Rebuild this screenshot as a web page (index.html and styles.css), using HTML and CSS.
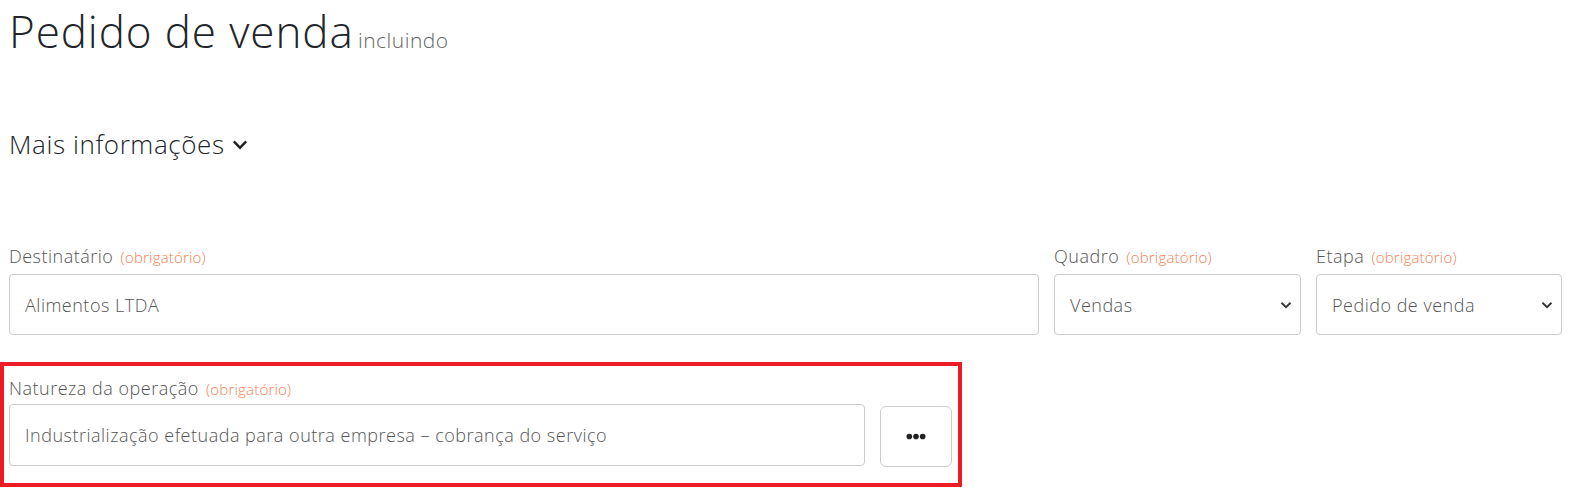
FILE: index.html
```html
<!DOCTYPE html>
<html lang="pt-BR">

<head>
    <meta charset="UTF-8">
    <meta name="viewport" content="width=device-width, initial-scale=1.0">
    <title>Pedido de venda</title>
    <link rel="stylesheet" href="styles.css">
</head>

<body>
    <div class="page">
        <h1 class="title">Pedido de venda <small>incluindo</small></h1>

        <h2 class="more">Mais informações
            <svg class="chev" viewBox="0 0 448 512" width="16" height="16">
                <path fill="#222" d="M207 381.5L12.7 187.1c-9.4-9.4-9.4-24.6 0-33.9l22.7-22.7c9.4-9.4 24.5-9.4 33.9 0L224 284.5l154.7-154c9.4-9.3 24.5-9.3 33.9 0l22.7 22.7c9.4 9.4 9.4 24.6 0 33.9L241 381.5c-9.4 9.4-24.6 9.4-34 0z"/>
            </svg>
        </h2>

        <div class="row">
            <div class="field">
                <label>Destinatário <span class="req">(obrigatório)</span></label>
                <div class="input">Alimentos LTDA</div>
            </div>
            <div class="field">
                <label>Quadro <span class="req">(obrigatório)</span></label>
                <div class="input select">Vendas
                    <svg viewBox="0 0 16 16" width="12" height="12"><path d="M2 5l6 6 6-6" fill="none" stroke="#333" stroke-width="2.4"/></svg>
                </div>
            </div>
            <div class="field">
                <label>Etapa <span class="req">(obrigatório)</span></label>
                <div class="input select">Pedido de venda
                    <svg viewBox="0 0 16 16" width="12" height="12"><path d="M2 5l6 6 6-6" fill="none" stroke="#333" stroke-width="2.4"/></svg>
                </div>
            </div>
        </div>

        <div class="highlight">
            <label>Natureza da operação <span class="req">(obrigatório)</span></label>
            <div class="pick">
                <div class="input">Industrialização efetuada para outra empresa – cobrança do serviço</div>
                <button class="dots">
                    <svg viewBox="0 0 24 8" width="20" height="7">
                        <circle cx="4" cy="4" r="3.4" fill="#222"/>
                        <circle cx="12" cy="4" r="3.4" fill="#222"/>
                        <circle cx="20" cy="4" r="3.4" fill="#222"/>
                    </svg>
                </button>
            </div>
        </div>
    </div>
</body>

</html>
```

FILE: styles.css
```css
body {
    margin: 0;
    font-family: "Open Sans", Arial, sans-serif;
    font-weight: 300;
    letter-spacing: 0.5px;
    color: #212529;
    background: #fff;
}

.page {
    padding: 0 9px;
}

.title {
    margin: 0;
    padding-top: 2px;
    font-size: 44px;
    font-weight: 300;
    line-height: 58px;
    letter-spacing: 0.9px;
}

.title small {
    margin-left: -8px;
    font-size: 21px;
    color: #666;
    letter-spacing: 0.5px;
}

.more {
    margin: 0;
    padding-top: 58px;
    font-size: 26px;
    font-weight: 300;
    line-height: 34px;
    letter-spacing: 0.6px;
}

.chev {
    vertical-align: 1px;
}

.row {
    display: grid;
    grid-template-columns: 1030fr 247fr 246fr;
    gap: 15px;
    margin-top: 83px;
}

label {
    display: block;
    font-size: 18px;
    color: #555;
    line-height: 24px;
    margin-bottom: 5px;
}

.req {
    margin-left: 2px;
    font-size: 15px;
    color: #f5804f;
    letter-spacing: 0.2px;
}

.input {
    box-sizing: border-box;
    height: 61px;
    border: 1px solid #ccc;
    border-radius: 4px;
    padding: 0 15px;
    font-size: 18px;
    color: #555;
    display: flex;
    align-items: center;
}

.select {
    justify-content: space-between;
    padding-right: 8px;
}

.highlight {
    box-sizing: border-box;
    width: 962px;
    height: 125px;
    margin: 27px 0 0 -9px;
    border: 4px solid #ed1c24;
    padding: 10px 5px 0 5px;
}

.highlight label {
    margin-bottom: 3px;
}

.pick {
    display: flex;
    align-items: flex-start;
    gap: 15px;
}

.pick .input {
    width: 856px;
    height: 62px;
}

.dots {
    box-sizing: border-box;
    width: 72px;
    height: 61px;
    margin-top: 2px;
    background: #fff;
    border: 1px solid #ccc;
    border-radius: 6px;
    display: flex;
    align-items: center;
    justify-content: center;
}
```
